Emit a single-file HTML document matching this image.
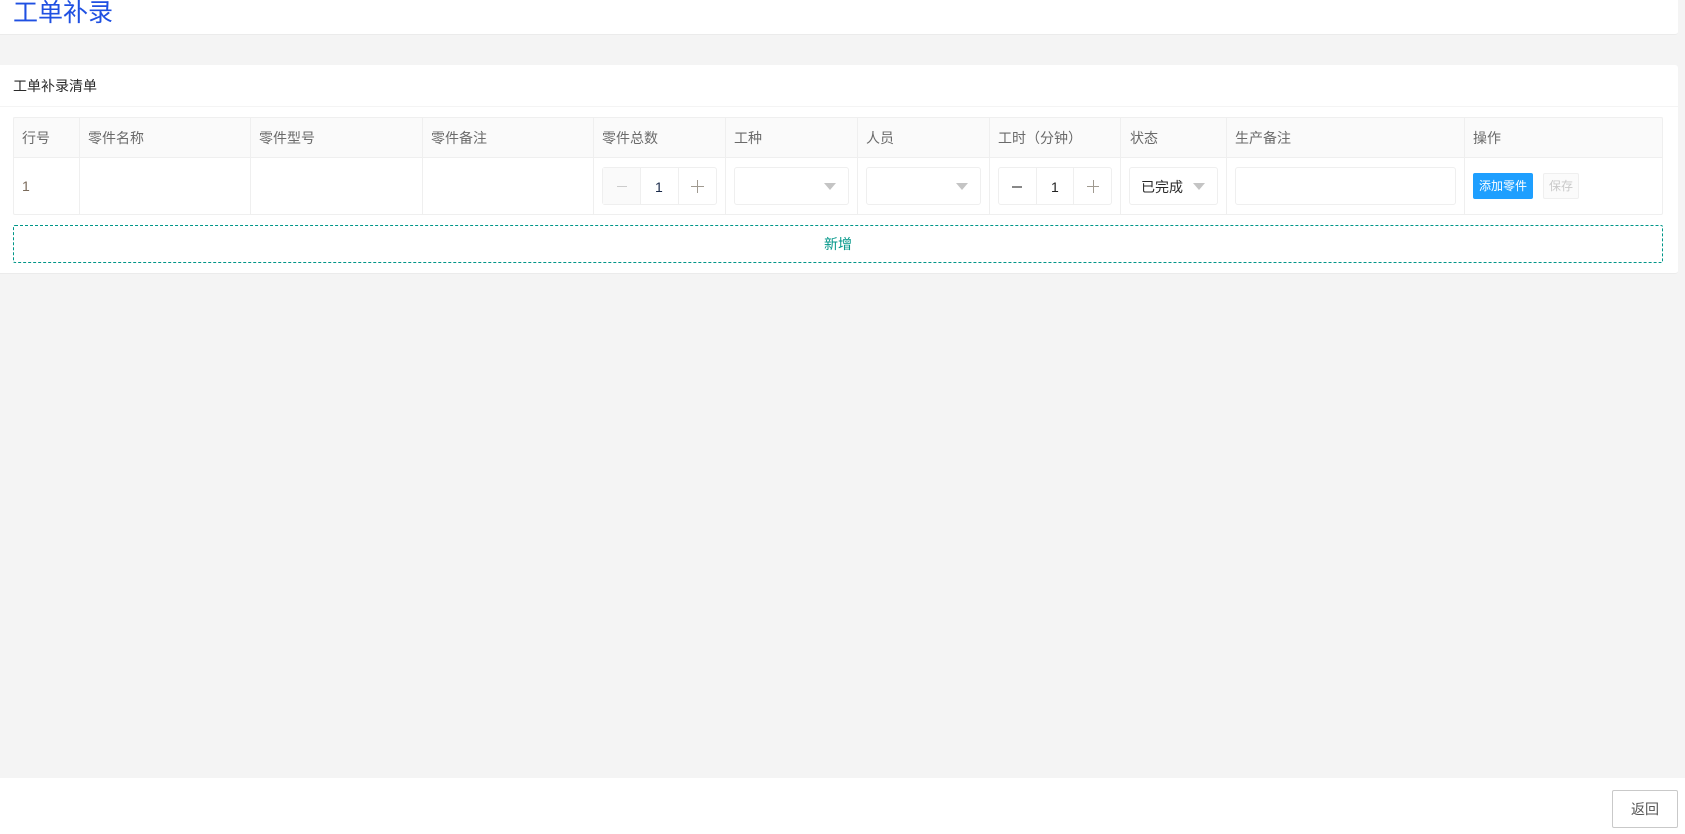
<!DOCTYPE html>
<html lang="zh-CN"><head><meta charset="utf-8"><title>工单补录</title>
<style>
html,body{margin:0;padding:0;width:1685px;height:834px;overflow:hidden;background:#f4f4f4;font-family:"Liberation Sans","Noto Sans CJK SC",sans-serif;font-size:14px;color:#6a6a6a}
div{position:absolute;box-sizing:border-box}
.t{white-space:nowrap;line-height:20px}
.v{width:1px;background:#efefef}
.b{border:1px solid #efefef;border-radius:3px;background:#fff}
.a{width:0;height:0;border-left:6px solid transparent;border-right:6px solid transparent;border-top:7px solid #c4c4c4;top:183px}
</style></head><body>
<div style="left:0;top:0;width:1678px;height:35px;background:#fff;border-bottom:1px solid #ebebeb;border-radius:0 0 3px 0"></div>
<div class="t" style="left:13px;top:-2px;font-size:25px;line-height:30px;color:#1f50e2">工单补录</div>

<div style="left:0;top:65px;width:1678px;height:209px;background:#fff;border-bottom:1px solid #ebebeb;border-radius:0 3px 3px 0"></div>
<div style="left:0;top:106px;width:1678px;height:1px;background:#f4f4f4"></div>
<div class="t" style="left:13px;top:76px;color:#2a2a2a">工单补录清单</div>

<div style="left:13px;top:117px;width:1650px;height:41px;background:#fafafa"></div>
<div style="left:13px;top:117px;width:1650px;height:98px;border:1px solid #efefef;border-radius:2px"></div>
<div style="left:13px;top:157px;width:1650px;height:1px;background:#efefef"></div>
<div class="v" style="left:79px;top:117px;height:98px"></div>
<div class="v" style="left:250px;top:117px;height:98px"></div>
<div class="v" style="left:422px;top:117px;height:98px"></div>
<div class="v" style="left:593px;top:117px;height:98px"></div>
<div class="v" style="left:725px;top:117px;height:98px"></div>
<div class="v" style="left:857px;top:117px;height:98px"></div>
<div class="v" style="left:989px;top:117px;height:98px"></div>
<div class="v" style="left:1120px;top:117px;height:98px"></div>
<div class="v" style="left:1226px;top:117px;height:98px"></div>
<div class="v" style="left:1464px;top:117px;height:98px"></div>

<div class="t" style="left:22px;top:128px">行号</div>
<div class="t" style="left:88px;top:128px">零件名称</div>
<div class="t" style="left:259px;top:128px">零件型号</div>
<div class="t" style="left:431px;top:128px">零件备注</div>
<div class="t" style="left:602px;top:128px">零件总数</div>
<div class="t" style="left:734px;top:128px">工种</div>
<div class="t" style="left:866px;top:128px">人员</div>
<div class="t" style="left:998px;top:128px">工时（分钟）</div>
<div class="t" style="left:1130px;top:128px">状态</div>
<div class="t" style="left:1235px;top:128px">生产备注</div>
<div class="t" style="left:1473px;top:128px">操作</div>

<div class="t" style="left:22px;top:176px;color:#7a6a5a">1</div>

<div class="b" style="left:602px;top:167px;width:115px;height:38px"></div>
<div style="left:603px;top:168px;width:38px;height:36px;background:#fafafa;border-right:1px solid #efefef"></div>
<div style="left:678px;top:168px;width:1px;height:36px;background:#efefef"></div>
<div style="left:617px;top:186px;width:10px;height:1px;background:#ccc"></div>
<div style="left:691px;top:186px;width:13px;height:1px;background:#a09a90"></div>
<div style="left:697px;top:180px;width:1px;height:13px;background:#a09a90"></div>
<div class="t" style="left:655px;top:177px;color:#1a2a4a">1</div>

<div class="b" style="left:734px;top:167px;width:115px;height:38px"></div>
<div class="a" style="left:824px"></div>
<div class="b" style="left:866px;top:167px;width:115px;height:38px"></div>
<div class="a" style="left:956px"></div>

<div class="b" style="left:998px;top:167px;width:114px;height:38px"></div>
<div style="left:1036px;top:168px;width:1px;height:36px;background:#efefef"></div>
<div style="left:1073px;top:168px;width:1px;height:36px;background:#efefef"></div>
<div style="left:1012px;top:186px;width:10px;height:2px;background:#888"></div>
<div style="left:1087px;top:186px;width:12px;height:1px;background:#a09a90"></div>
<div style="left:1093px;top:180px;width:1px;height:13px;background:#a09a90"></div>
<div class="t" style="left:1051px;top:177px;color:#222">1</div>

<div class="b" style="left:1129px;top:167px;width:89px;height:38px"></div>
<div class="t" style="left:1141px;top:177px;color:#2a2a2a">已完成</div>
<div class="a" style="left:1193px"></div>

<div class="b" style="left:1235px;top:167px;width:221px;height:38px"></div>

<div class="t" style="left:1473px;top:173px;width:60px;height:26px;background:#1e9fff;border-radius:2px;color:#fff;font-size:12px;line-height:26px;text-align:center">添加零件</div>
<div class="t" style="left:1543px;top:173px;width:36px;height:26px;background:#fbfbfb;border:1px solid #efefef;border-radius:2px;color:#c9c9c9;font-size:12px;line-height:25px;text-align:center">保存</div>

<div class="t" style="left:13px;top:225px;width:1650px;height:38px;border:1px dashed #009688;border-radius:2px;color:#009688;line-height:36px;text-align:center">新增</div>

<div style="left:0;top:778px;width:1685px;height:56px;background:#fff"></div>
<div class="t" style="left:1612px;top:790px;width:66px;height:38px;background:#fff;border:1px solid #c9c9c9;border-radius:2px;color:#555;line-height:36px;text-align:center">返回</div>
</body></html>
